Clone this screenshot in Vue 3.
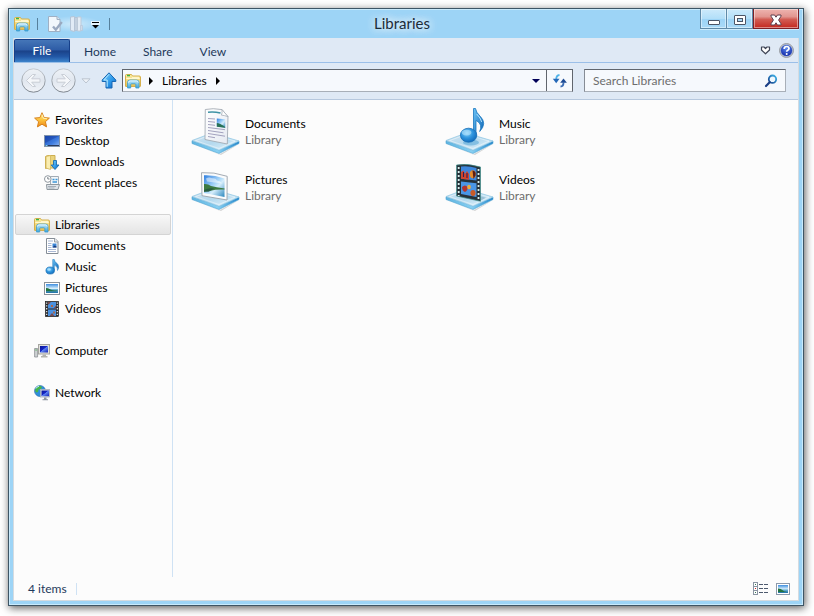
<script setup>
import { ref } from 'vue'

const tabs = ['Home', 'Share', 'View']
const search = ref('')
const selected = ref('Libraries')

const groups = [
  {
    name: 'Favorites',
    icon: 'star',
    items: [
      { name: 'Desktop', icon: 'desktop' },
      { name: 'Downloads', icon: 'downloads' },
      { name: 'Recent places', icon: 'recent' }
    ]
  },
  {
    name: 'Libraries',
    icon: 'folder',
    items: [
      { name: 'Documents', icon: 'document' },
      { name: 'Music', icon: 'music' },
      { name: 'Pictures', icon: 'picture' },
      { name: 'Videos', icon: 'video' }
    ]
  },
  { name: 'Computer', icon: 'computer', items: [] },
  { name: 'Network', icon: 'network', items: [] }
]

const libraries = [
  { name: 'Documents', icon: 'lib-documents' },
  { name: 'Music', icon: 'lib-music' },
  { name: 'Pictures', icon: 'lib-pictures' },
  { name: 'Videos', icon: 'lib-videos' }
]
</script>

<template>
  <div class="page">
    <svg class="sprite" aria-hidden="true">
      <defs>
        <linearGradient id="gFolder" x1="0" y1="0" x2="0" y2="1">
          <stop offset="0" stop-color="#fbeea6" /><stop offset="1" stop-color="#e9c04f" />
        </linearGradient>
        <linearGradient id="gStand" x1="0" y1="0" x2="0" y2="1">
          <stop offset="0" stop-color="#c4ebfb" /><stop offset="1" stop-color="#3aa4dc" />
        </linearGradient>
        <linearGradient id="gStar" x1="0" y1="0" x2="0" y2="1">
          <stop offset="0" stop-color="#fff3a0" /><stop offset=".5" stop-color="#fcc33c" /><stop offset="1" stop-color="#f08a1c" />
        </linearGradient>
        <linearGradient id="gScreen" x1="0" y1="0" x2="1" y2="1">
          <stop offset="0" stop-color="#1c4cb8" /><stop offset=".6" stop-color="#3f7de0" /><stop offset="1" stop-color="#8fb6f0" />
        </linearGradient>
        <linearGradient id="gMonitor" x1="0" y1="0" x2="1" y2="1">
          <stop offset="0" stop-color="#0a1690" /><stop offset=".45" stop-color="#1626c8" /><stop offset=".5" stop-color="#5f86f2" /><stop offset="1" stop-color="#1524b8" />
        </linearGradient>
        <linearGradient id="gNote" x1="0" y1="0" x2="1" y2="1">
          <stop offset="0" stop-color="#6cc4f6" /><stop offset="1" stop-color="#0c62b4" />
        </linearGradient>
        <radialGradient id="gHead" cx=".4" cy=".35" r=".7">
          <stop offset="0" stop-color="#8ad3f8" /><stop offset=".5" stop-color="#2f95de" /><stop offset="1" stop-color="#0f68b8" />
        </radialGradient>
        <linearGradient id="gSky" x1="0" y1="0" x2="0" y2="1">
          <stop offset="0" stop-color="#3d8ee0" /><stop offset=".5" stop-color="#d8effb" /><stop offset=".6" stop-color="#6fb4d8" /><stop offset="1" stop-color="#1c6fa6" />
        </linearGradient>
        <linearGradient id="gPhoto" x1="0" y1="0" x2="1" y2="1">
          <stop offset="0" stop-color="#2f7fe0" /><stop offset=".45" stop-color="#a5d4f8" /><stop offset=".6" stop-color="#d5edfb" /><stop offset="1" stop-color="#2a86bd" />
        </linearGradient>
        <linearGradient id="gTray" x1="0" y1="0" x2="1" y2="1">
          <stop offset="0" stop-color="#d3e4f0" /><stop offset=".5" stop-color="#b4d9ee" /><stop offset="1" stop-color="#e4f4fc" />
        </linearGradient>
        <linearGradient id="gTrayEdge" x1="0" y1="0" x2="1" y2="0">
          <stop offset="0" stop-color="#5eb4e0" /><stop offset=".55" stop-color="#86cff2" /><stop offset="1" stop-color="#2587cc" />
        </linearGradient>
        <linearGradient id="gPaper" x1="0" y1="0" x2="1" y2="1">
          <stop offset="0" stop-color="#ffffff" /><stop offset="1" stop-color="#e6eaf2" />
        </linearGradient>
        <linearGradient id="gUp" x1="0" y1="0" x2="1" y2="1">
          <stop offset="0" stop-color="#7ed2fb" /><stop offset=".6" stop-color="#2b96e8" /><stop offset="1" stop-color="#0d5cb8" />
        </linearGradient>
        <radialGradient id="gHelp" cx=".5" cy=".3" r=".7">
          <stop offset="0" stop-color="#5c8cf0" /><stop offset="1" stop-color="#1228a8" />
        </radialGradient>
        <linearGradient id="gLens" x1="1" y1="0" x2="0" y2="1">
          <stop offset="0" stop-color="#3db4ea" /><stop offset="1" stop-color="#16418c" />
        </linearGradient>
        <linearGradient id="gCircle" x1="0" y1="0" x2="0" y2="1">
          <stop offset="0" stop-color="#eef2f7" /><stop offset=".5" stop-color="#e1e7ef" /><stop offset="1" stop-color="#f0f3f8" />
        </linearGradient>
        <linearGradient id="gCircleEdge" x1="0" y1="0" x2="0" y2="1">
          <stop offset="0" stop-color="#c3c9d0" /><stop offset="1" stop-color="#7d858e" />
        </linearGradient>
      </defs>

      <symbol id="folder" viewBox="0 0 16 16">
        <path d="M.5 13V2.5q0-1 1-1h5l1 1.500h6.500q1.500 0 1.500 1V13q0 .5-.5.5H1q-.5 0-.5-.5z" fill="url(#gFolder)" stroke="#d5b04e" />
        <path d="M2 2.600h3" stroke="#39b54a" stroke-width="1.400" />
        <path d="M7 4.400h7M1.300 5.500h13.400" stroke="#fff8cf" />
        <path d="M2.500 15V9.500Q2.500 7 5 7h6.500Q14 7 14 9.500V15h-3.200v-3.400q0-.8-.8-.8H6.500q-.8 0-.8.8V15z" fill="url(#gStand)" stroke="#3c9dcd" stroke-width=".8" />
        <path d="M3.500 9.500q0-1.600 1.700-1.600h6.200q1.700 0 1.700 1.600" fill="none" stroke="#ecf9ff" stroke-width=".9" />
      </symbol>

      <symbol id="star" viewBox="0 0 16 16">
        <path d="M8 .7l2.100 4.900 5.300.5-4 3.600 1.200 5.200L8 12.200l-4.600 2.700 1.200-5.200-4-3.600 5.300-.5z" fill="url(#gStar)" stroke="#d9831c" stroke-linejoin="round" />
        <path d="M8 2.500l1.400 3.800 3.500.3" fill="none" stroke="#fff8cc" stroke-width=".8" />
      </symbol>

      <symbol id="desktop" viewBox="0 0 16 16">
        <rect x=".5" y="2.500" width="15" height="11" fill="url(#gScreen)" stroke="#8194ad" />
        <path d="M1 3h14L1 10z" fill="#0b2f8f" opacity=".35" />
        <path d="M1 12.500h14" stroke="#2b3b5c" />
        <path d="M1.500 12.500h2" stroke="#7fd0f2" />
      </symbol>

      <symbol id="downloads" viewBox="0 0 16 16">
        <path d="M1.500 2.500l2-1h7.500v12.500H3.500l-2 .5z" fill="#ead37c" stroke="#cdae51" />
        <path d="M2 2.500l4.500-1v14L2 14z" fill="#faedb0" stroke="#d3b65c" stroke-width=".8" />
        <path d="M9.500 6.500h3V11h2.500L11 15.500 7.200 11h2.300z" fill="url(#gUp)" stroke="#1c6cae" stroke-width=".9" stroke-linejoin="round" />
      </symbol>

      <symbol id="recent" viewBox="0 0 16 16">
        <path d="M6.500 1.500h8v10h-8z" fill="#f3f7fa" stroke="#a3acb5" />
        <path d="M8.500 4.500h2m1 0h2M8.500 7h4.500" stroke="#3c96d8" stroke-width="1.400" />
        <path d="M2.500 9.500h13l-1.500 5h-11z" fill="#dfe4e9" stroke="#8f989f" />
        <path d="M4 11.500h8M4.500 13h6" stroke="#a6afb8" />
        <circle cx="3.800" cy="4" r="3.300" fill="#fff" stroke="#8f979e" />
        <path d="M3.800 2v2h1.700" fill="none" stroke="#59636c" stroke-width=".8" />
      </symbol>

      <symbol id="document" viewBox="0 0 16 16">
        <path d="M2.500.5h8.500L14 3.500v12H2.500z" fill="#fff" stroke="#858d96" />
        <path d="M10.500.5v3.500H14" fill="#e6eaef" stroke="#858d96" stroke-width=".8" />
        <path d="M4 3h5M4 5.500h3.500M4 7.500h3.500M4 9.500h3.500M4 11.500h8M4 13.500h8" stroke="#9fb0cf" stroke-width=".9" />
        <rect x="8.500" y="5.500" width="4" height="4" fill="#3c86d6" />
        <path d="M8.500 9.500l2-2 2 1v1z" fill="#1e3a7a" />
      </symbol>

      <symbol id="music" viewBox="0 0 16 16">
        <path d="M8.700.5h1.600q.3 2.200 2.300 3.600 3.600 3 .9 7.400.8-3.600-3.200-5.500v5.200H8.700z" fill="url(#gNote)" stroke="#1c76bd" stroke-width=".5" />
        <ellipse cx="6.200" cy="11.500" rx="4.300" ry="3.600" fill="url(#gHead)" stroke="#1a6fb4" stroke-width=".6" />
        <ellipse cx="5" cy="10.500" rx="1.800" ry="1.200" fill="#b5e5ff" opacity=".7" />
      </symbol>

      <symbol id="picture" viewBox="0 0 16 16">
        <rect x=".5" y="2.500" width="15" height="12" fill="#fff" stroke="#8a9199" />
        <rect x="2" y="4" width="12" height="9" fill="url(#gSky)" />
        <path d="M2 8q2 0 4 1.300t8 1.200L12 11.200H2z" fill="#23733f" />
      </symbol>

      <symbol id="video" viewBox="0 0 16 16">
        <rect x="1.500" y=".5" width="13" height="15" fill="#26282c" stroke="#111" stroke-width=".6" />
        <rect x="4" y="1" width="8" height="6.500" fill="#4a91e0" />
        <rect x="4" y="8.500" width="8" height="6.500" fill="#4a91e0" />
        <path d="M4 1h3L4 4zM12 7.500V4.500L9.500 7.500zM5.500 15l2.500-3 2.500 3z" fill="#7a4a4e" />
        <path d="M7 4h2v2H7zM9 10.500h2v2H9z" fill="#a8684e" />
        <path d="M2.700 1.500v14M13.300 1.500v14" stroke="#f2f2f2" stroke-width="1.200" stroke-dasharray="1.300 1.500" />
      </symbol>

      <symbol id="computer" viewBox="0 0 16 16">
        <path d="M.6 5.500h3v8.500h-3z" fill="#cdd0d2" stroke="#8d9194" stroke-width=".8" />
        <path d="M1.400 7h1.400" stroke="#4bb04f" />
        <rect x="4.500" y="1.500" width="11" height="9.500" fill="#e2e2de" stroke="#a6a6a0" />
        <rect x="6" y="3" width="8" height="6.500" fill="url(#gMonitor)" />
        <path d="M8.500 11.500h3.500v1.500h1.500V14.500H7V13h1.500z" fill="#b3b3ae" />
      </symbol>

      <symbol id="network" viewBox="0 0 16 16">
        <circle cx="6" cy="6" r="5.500" fill="#2f8fdc" stroke="#2b6ba8" stroke-width=".6" />
        <path d="M3 2q3-1.800 5 0L7 4 4.500 4.500 4 7l-2 .5L1 5zM6 8l3-2 2 1-3 4H6z" fill="#48b648" />
        <path d="M2 3.500q1-2 3-2.300" stroke="#c9f0ff" fill="none" />
        <rect x="6.500" y="4.500" width="9" height="7.500" fill="#dfe4ea" stroke="#a9b0ba" stroke-width=".8" />
        <rect x="7.500" y="5.500" width="7.500" height="5.700" fill="url(#gMonitor)" />
        <path d="M10 12.500h2.500v1.800H14v1H8.500v-1H10z" fill="#8c93a0" />
      </symbol>

      <symbol id="save" viewBox="0 0 16 16">
        <path d="M1.500.5h8.500l3 3v12H1.500z" fill="#f2f7fc" stroke="#9fb0c4" />
        <path d="M10 .5V3.500h3" fill="#dbe5ef" stroke="#9fb0c4" />
        <path d="M6 10.500l2.800 3.200L14.800 6" fill="none" stroke="#9aa9c0" stroke-width="2.400" />
      </symbol>

      <symbol id="newfolder" viewBox="0 0 16 16">
        <path d="M1.500 1l4-.5v15l-4-1z" fill="#e1ebf6" stroke="#b5c4d6" />
        <path d="M5.500 1.500h3v13h-3z" fill="#c3d0df" stroke="#b5c4d6" />
        <path d="M8.500 1H12v14H8.500z" fill="#e3ecf5" stroke="#bccad9" />
        <path d="M11.500 9.500h2v5h-2z" fill="#cfdbe8" stroke="#b5c4d6" stroke-width=".6" />
      </symbol>

      <symbol id="tray" viewBox="0 0 49 48">
        <path d="M2 36l26 10.500L48 36l-18 11z" fill="#000" opacity=".16" />
        <path d="M1 32.700L28 42l20-9v2.500L28 45.500 1 35.500z" fill="url(#gTrayEdge)" stroke="#4fa3d0" stroke-width=".6" />
        <path d="M1 32.500L21 25l27 8-20 9.300z" fill="url(#gTray)" stroke="#8ec6e2" stroke-width=".7" />
        <path d="M4.500 32.600L21 26.500l23 6.600-16 7.400z" fill="none" stroke="#fff" stroke-width=".6" opacity=".7" />
      </symbol>

      <symbol id="lib-documents" viewBox="0 0 49 48">
        <use href="#tray" width="49" height="48" />
        <path d="M14 31.500L14.300 1.500Q22-.2 31 1.600l6 7L36.300 36z" fill="url(#gPaper)" stroke="#9ca3ac" stroke-width=".8" />
        <path d="M31 1.600q.5 3.500-.6 5.500 3 .3 6.600 1.500z" fill="#fff" stroke="#a6adb6" stroke-width=".8" />
        <path d="M17 4.300q6-.8 12.500.8" stroke="#3f93a5" stroke-width="1.500" fill="none" />
        <path d="M17 10.500l7 .5M17 13.500l7 .7M17 16.500l7 .8M17 19.500l17 2.200M17 22.500l15.500 2.300M17 25.500l17 2.700M17 28.500l7 1.200" stroke="#9a98b8" stroke-width=".9" />
        <path d="M25.800 10.500l8.400.8v8.400l-8.400-1z" fill="url(#gPhoto)" />
        <path d="M25.800 15q3 0 8.400 4v.7l-8.400-1z" fill="#287157" />
      </symbol>

      <symbol id="lib-pictures" viewBox="0 0 49 48">
        <use href="#tray" width="49" height="48" />
        <path d="M10.500 8.700q12-1 25.700 3.600L36 36 11 31.700z" fill="#fafbfc" stroke="#9aa1aa" stroke-width=".9" />
        <path d="M13 11.300q10-.5 20.500 3.200v18.500L13 29z" fill="url(#gPhoto)" />
        <path d="M15 14.500q3-2 6-.3 4-.4 5 2.300 3 0 5 3L16 17.500z" fill="#fff" opacity=".5" />
        <path d="M13 20q4-.3 7 2 5 1.300 13.500 2.500v1q-9-.3-14 1.200L13 28z" fill="#3d7a42" />
        <path d="M13 26q5-2.500 10-1.500L17.500 28l-4.500-.6z" fill="#1a4a40" opacity=".6" />
      </symbol>

      <symbol id="lib-music" viewBox="0 0 49 48">
        <use href="#tray" width="49" height="48" />
        <ellipse cx="26" cy="34.500" rx="8" ry="3" fill="#4a9fd4" opacity=".5" />
        <path d="M28.500.5h2q.6 4 4.400 7.500 7.600 7.300-.2 15.500 3.200-6.800-2.700-10.500L31 12.500v15.500h-2.500z" fill="url(#gNote)" stroke="#1976be" stroke-width=".8" />
        <path d="M31.700 6q4 4 5 8" fill="none" stroke="#bce8ff" stroke-width=".9" />
        <ellipse cx="23.600" cy="27.200" rx="8.200" ry="7" fill="url(#gHead)" stroke="#1a70b6" stroke-width=".8" />
        <ellipse cx="21.500" cy="24.600" rx="4.800" ry="2.800" fill="#bfe9ff" opacity=".55" />
      </symbol>

      <symbol id="lib-videos" viewBox="0 0 49 48">
        <use href="#tray" width="49" height="48" />
        <path d="M17 32.500l18 4.500 6-3.300-7-2z" fill="#7aa6bd" opacity=".55" />
        <path d="M11.500 1Q23-1 35.500 3v34.300L11.500 32z" fill="#26323a" stroke="#3f8f8c" stroke-width=".7" />
        <path d="M16 2.500q8-.7 15.500 1.400v12.600L16 14.800z" fill="#3c86dc" />
        <path d="M16 17.500l15.500 1.800v13.800L16 30z" fill="#4a96e6" />
        <path d="M16 14.800V8l2.500-1.500L20 10l2-3 2 3v5.800z" fill="#d2452c" />
        <ellipse cx="27.800" cy="10.300" rx="3" ry="4" fill="#e48b2c" />
        <path d="M27.500 6.400q4 .5 3 5l-2 3.600z" fill="#5a1d18" />
        <path d="M17 23q3-3 5.500 0 .8 3-2.500 5-3-1-3-5z" fill="#b3352e" />
        <ellipse cx="24" cy="23" rx="1.800" ry="2.300" fill="#efae3b" />
        <ellipse cx="28" cy="29" rx="2.600" ry="2.900" fill="#ca5b28" />
        <path d="M18.500 8v5M22 9v5" stroke="#302058" stroke-width="1.100" />
        <path d="M13.700 3v29M33.500 5v31" stroke="#d9f0ef" stroke-width="1.800" stroke-dasharray="2 2" />
      </symbol>
    </svg>

    <div class="window">
      <header class="titlebar">
        <div class="quick">
          <svg class="i16"><use href="#folder" /></svg>
          <span class="bar"></span>
          <div class="quick-tools">
            <button type="button" aria-label="Properties"><svg class="i16"><use href="#save" /></svg></button>
            <button type="button" aria-label="New folder"><svg class="i16"><use href="#newfolder" /></svg></button>
            <button type="button" aria-label="Customize Quick Access Toolbar">
              <svg width="9" height="16" viewBox="0 0 9 16"><path d="M0 5h9v4H0z" fill="#fff" opacity=".7" /><path d="M1 6.500h7" stroke="#000" /><path d="M1 9h7l-3.500 3.500z" fill="#000" /></svg>
            </button>
          </div>
          <span class="bar"></span>
        </div>
        <h1>Libraries</h1>
        <div class="caption">
          <button type="button" aria-label="Minimize">
            <svg width="14" height="14" viewBox="0 0 14 14"><rect x="1.500" y="8.500" width="11" height="4" rx=".5" fill="#fff" stroke="#4c5566" /></svg>
          </button>
          <button type="button" aria-label="Maximize">
            <svg width="14" height="14" viewBox="0 0 14 14"><rect x="1.500" y="3.500" width="11" height="9" rx=".5" fill="#fff" stroke="#4c5566" /><rect x="4.500" y="6.500" width="5" height="3" fill="#a8d8f5" stroke="#4c5566" /></svg>
          </button>
          <button type="button" class="close" aria-label="Close">
            <svg width="14" height="14" viewBox="0 0 14 14"><path d="M2 3h3.600L7 5.200 8.400 3H12v1.200L9.600 8l2.400 3.800V13H8.400L7 10.800 5.600 13H2v-1.200L4.400 8 2 4.200z" fill="#fff" stroke="#5c3f4c" stroke-linejoin="round" /></svg>
          </button>
        </div>
      </header>

      <div class="client">
        <nav class="ribbon" aria-label="Ribbon">
          <button type="button" class="file">File</button>
          <button v-for="tab in tabs" :key="tab" type="button">{{ tab }}</button>
          <div class="ribbon-end">
            <button type="button" aria-label="Expand the Ribbon">
              <svg width="11" height="9" viewBox="0 0 11 9"><path d="M1.500 1h2.500l1.500 1.500L7 1h2.500v3L5.500 7.800 1.500 4z" fill="#fff" stroke="#3f4556" stroke-width="1.200" stroke-linejoin="round" /></svg>
            </button>
            <button type="button" aria-label="Help">
              <svg width="15" height="15" viewBox="0 0 15 15"><circle cx="7.500" cy="7.500" r="6.900" fill="#e3e6ea" stroke="#8b8f96" /><circle cx="7.500" cy="7.500" r="5.600" fill="url(#gHelp)" stroke="#3356b4" stroke-width=".6" /><path d="M5.200 6q0-2.500 2.400-2.500T10 5.600q0 1.100-1.300 1.700-1 .5-1 1.500" fill="none" stroke="#fff" stroke-width="1.700" /><circle cx="7.700" cy="11" r="1" fill="#fff" /></svg>
            </button>
          </div>
        </nav>

        <div class="navbar">
          <div class="history">
            <button type="button" aria-label="Back">
              <svg width="25" height="25" viewBox="0 0 25 25"><circle cx="12.500" cy="12.500" r="11.700" fill="url(#gCircle)" stroke="url(#gCircleEdge)" /><path d="M5.500 12.500l6-6h3l-3.800 4.300h8.300v3.400h-8.300l3.800 4.300h-3z" fill="#f5f7fa" stroke="#c9ced6" stroke-linejoin="round" /></svg>
            </button>
            <button type="button" aria-label="Forward">
              <svg width="25" height="25" viewBox="0 0 25 25"><circle cx="12.500" cy="12.500" r="11.700" fill="url(#gCircle)" stroke="url(#gCircleEdge)" /><path d="M19.500 12.500l-6-6h-3l3.800 4.300H6v3.400h8.300l-3.800 4.300h3z" fill="#f5f7fa" stroke="#c9ced6" stroke-linejoin="round" /></svg>
            </button>
            <button type="button" aria-label="Recent locations">
              <svg width="10" height="6" viewBox="0 0 10 6"><path d="M1 .8h8L5 5z" fill="#eef2f7" stroke="#bcc5d0" /></svg>
            </button>
          </div>
          <button type="button" class="up" aria-label="Up">
            <svg width="16" height="17" viewBox="0 0 16 17"><path d="M8 .8L14.800 8v1.500h-3.800V16H5V9.500H1.200V8z" fill="url(#gUp)" stroke="#1667b4" stroke-linejoin="round" /><path d="M8 2.300L2.900 8H6.200v6.800" fill="none" stroke="#b9e9ff" /></svg>
          </button>
          <div class="address">
            <svg class="i16"><use href="#folder" /></svg>
            <svg class="chev" width="6" height="8" viewBox="0 0 6 8"><path d="M0 0l4 4-4 4z" /></svg>
            <a href="#libraries">Libraries</a>
            <svg class="chev" width="6" height="8" viewBox="0 0 6 8"><path d="M1 0l4 4-4 4z" /></svg>
            <button type="button" class="drop" aria-label="Previous locations">
              <svg width="8" height="4" viewBox="0 0 8 4"><path d="M0 0h8L4 4z" fill="#000058" /></svg>
            </button>
            <button type="button" class="refresh" aria-label="Refresh">
              <svg width="16" height="14" viewBox="0 0 16 14"><path d="M7.500 1Q4.200 1.200 4.200 5.500" fill="none" stroke="#4fb2e8" stroke-width="1.800" /><path d="M.8 4.800h6.700L4.200 9.200z" fill="#2468b8" /><path d="M8.500 12.500q3 0 3-4" fill="none" stroke="#3a6cb4" stroke-width="1.800" /><path d="M8.200 8.800h6.700L11.500 4.400z" fill="#1c4a94" /></svg>
            </button>
          </div>
          <form class="search" role="search" @submit.prevent>
            <input v-model="search" type="text" placeholder="Search Libraries" aria-label="Search Libraries" />
            <button type="submit" aria-label="Search">
              <svg width="14" height="14" viewBox="0 0 14 14"><circle cx="8.500" cy="5.200" r="3.700" fill="#eef8fe" stroke="url(#gLens)" stroke-width="1.800" /><path d="M5.700 8.200L2 12" stroke="#1b3f86" stroke-width="2.200" stroke-linecap="round" /></svg>
            </button>
          </form>
        </div>

        <div class="body">
          <nav class="tree" aria-label="Navigation pane">
            <ul v-for="group in groups" :key="group.name">
              <li>
                <a href="#" :class="{ selected: selected === group.name }" @click.prevent="selected = group.name">
                  <svg class="i16"><use :href="'#' + group.icon" /></svg>{{ group.name }}
                </a>
              </li>
              <li v-for="item in group.items" :key="item.name">
                <a href="#" class="child">
                  <svg class="i16"><use :href="'#' + item.icon" /></svg>{{ item.name }}
                </a>
              </li>
            </ul>
          </nav>
          <main class="files">
            <a v-for="lib in libraries" :key="lib.name" href="#" class="tile">
              <svg class="big"><use :href="'#' + lib.icon" /></svg>
              <span class="label">
                <span>{{ lib.name }}</span>
                <span class="kind">Library</span>
              </span>
            </a>
          </main>
        </div>

        <footer class="status">
          <span class="count">4 items</span>
          <div class="views">
            <button type="button" aria-label="Details view">
              <svg width="16" height="14" viewBox="0 0 16 14"><g fill="#fff" stroke="#8b95a3"><rect x=".5" y=".5" width="4" height="4" /><rect x=".5" y="4.500" width="4" height="4" /><rect x=".5" y="8.500" width="4" height="4" /></g><path d="M2 2.500h1M2 10.500h1" stroke="#3c7a55" /><path d="M2 6.500h1" stroke="#c22" /><path d="M6 2.500h4m1 0h4M6 6.500h4m1 0h4M6 10.500h4m1 0h4" stroke="#4d5a6e" /></svg>
            </button>
            <button type="button" aria-label="Large icons view">
              <svg width="14" height="12" viewBox="0 0 14 12"><rect x=".5" y=".5" width="13" height="11" fill="#fff" stroke="#8c99ab" /><rect x="2" y="2" width="10" height="8" fill="url(#gSky)" /><path d="M2 5.500q3 0 5 2t5 1L10 9H2z" fill="#23733f" /></svg>
            </button>
          </div>
        </footer>
      </div>
    </div>
  </div>
</template>

<style>
body {
  background: #fff;
}
</style>

<style scoped>
.page {
  box-sizing: border-box;
  display: flex;
  min-height: 100vh;
  padding: 8px 10px 10px 8px;
  font-family: Lato, "Open Sans", "Noto Sans", sans-serif;
  font-size: 12px;
  line-height: 16px;
  color: #000;
}

.sprite {
  position: absolute;
  width: 0;
  height: 0;
}

svg {
  display: block;
  flex: none;
}

.i16 {
  width: 16px;
  height: 16px;
}

button {
  display: flex;
  align-items: center;
  justify-content: center;
  box-sizing: border-box;
  padding: 0;
  border: 0;
  background: none;
  font: inherit;
  color: inherit;
}

a {
  color: inherit;
  text-decoration: none;
}

.window {
  display: flex;
  flex: 1;
  flex-direction: column;
  min-width: 0;
  padding: 0 4px 4px;
  border: 1px solid #3d5565;
  background: #9dd4f6;
  box-shadow: inset 0 0 0 1px #c9eafc, 1px 2px 8px rgba(0, 0, 0, 0.65);
}

.titlebar {
  display: grid;
  grid-template-columns: 1fr auto 1fr;
  height: 29px;
}

.quick {
  display: flex;
  align-items: center;
  gap: 7px;
  padding-left: 1px;
}

.quick-tools {
  display: flex;
  gap: 6px;
  padding: 0 2px;
  background: radial-gradient(closest-side, rgba(255, 255, 255, 0.5), rgba(255, 255, 255, 0));
}

.bar {
  width: 1px;
  height: 12px;
  background: #56809c;
}

h1 {
  align-self: center;
  margin: 0;
  padding: 0 8px 2px 0;
  font-size: 15px;
  font-weight: 400;
  line-height: 20px;
  color: #1c2c38;
  text-shadow: 0 0 8px #fff, 0 0 8px #fff;
}

.caption {
  display: flex;
  align-self: start;
  justify-content: flex-end;
}

.caption button {
  width: 27px;
  height: 20px;
  border: 1px solid #5f8aa8;
  border-top: 0;
  background: linear-gradient(#cdeafb, #b2dff9 50%, #9dd4f6 55%, #a9daf8);
  box-shadow: inset 0 0 0 1px rgba(255, 255, 255, 0.45), 0 1px 0 #cdecfd;
}

.caption button + button {
  width: 26px;
  border-left: 0;
}

.caption button.close {
  width: 46px;
  border-left: 1px solid;
  border-color: #7c2026;
  background: linear-gradient(#eeb5b0, #e29690 40%, #d25c53 55%, #c4281e);
}

.client {
  display: flex;
  flex: 1;
  flex-direction: column;
  border: 1px solid #d5dbe0;
  border-top: 0;
  background: #fcfcfc;
}

.ribbon {
  display: flex;
  align-items: stretch;
  gap: 1px;
  box-sizing: border-box;
  height: 25px;
  padding-top: 1px;
  border-bottom: 1px solid #9bbfe8;
  background: #dfe9f5;
  color: #1e395b;
}

.ribbon > button {
  padding: 2px 13px 0;
}

.ribbon > .file {
  width: 56px;
  padding: 0;
  border: 1px solid #16408a;
  border-bottom: 0;
  border-radius: 2px 2px 0 0;
  background: linear-gradient(#4576b8, #2d5ca6 45%, #1a4289 50%, #2257a5 75%, #3d84cc);
  color: #fff;
}

.ribbon-end {
  display: flex;
  align-items: center;
  gap: 8px;
  margin-left: auto;
  padding-right: 4px;
}

.navbar {
  display: flex;
  align-items: center;
  box-sizing: border-box;
  height: 37px;
  padding: 0 12px 1px 7px;
  border-bottom: 1px solid #b6c8de;
  background: #dfe9f5;
}

.history {
  display: flex;
  align-items: center;
  gap: 5px;
}

.up {
  margin: 0 5px 0 10px;
}

.address,
.search {
  display: flex;
  align-items: center;
  box-sizing: border-box;
  height: 23px;
  border: 1px solid #a8afb8;
  border-top-color: #60656d;
  border-left-color: #868c95;
  background: #f6f9fd;
}

.address {
  flex: 1;
  gap: 8px;
  padding-left: 2px;
  border-color: #60656d #60656d #a8afb8;
}

.address .chev {
  margin-right: -1px;
}

.drop {
  width: 20px;
  height: 21px;
  margin-left: auto;
  margin-right: -8px;
}

.refresh {
  width: 26px;
  height: 21px;
  border-left: 1px solid #60656d;
}

.search {
  width: 202px;
  margin-left: 11px;
  padding: 0 7px 0 8px;
}

.search input {
  flex: 1;
  min-width: 0;
  padding: 0;
  border: 0;
  outline: 0;
  background: none;
  font: inherit;
}

.search input::placeholder {
  color: #6d6d6d;
  opacity: 1;
}

.body {
  display: flex;
  flex: 1;
}

.tree {
  box-sizing: border-box;
  width: 159px;
  padding: 9px 1px 0;
  border-right: 1px solid #cfe2f4;
}

.tree ul {
  margin: 0 0 21px;
  padding: 0;
  list-style: none;
}

.tree a {
  display: flex;
  align-items: center;
  gap: 5px;
  box-sizing: border-box;
  height: 21px;
  padding-left: 18px;
  border: 1px solid transparent;
  border-radius: 2px;
}

.tree .child {
  padding-left: 28px;
}

.tree .selected {
  border-color: #d4d4d4;
  background: linear-gradient(#f8f8f8, #e4e4e4);
}

.files {
  display: grid;
  flex: 1;
  grid-template-columns: repeat(auto-fill, 254px);
  grid-auto-rows: 56px;
  align-content: start;
  padding: 4px 0 0 18px;
}

.tile {
  display: flex;
  align-items: center;
  gap: 5px;
}

.big {
  width: 49px;
  height: 48px;
}

.label {
  display: flex;
  flex-direction: column;
}

.kind {
  color: #6d6d6d;
}

.status {
  display: flex;
  align-items: center;
  justify-content: space-between;
  height: 23px;
  padding: 0 8px 0 14px;
  color: #1e395b;
}

.count {
  padding-right: 9px;
  border-right: 1px solid #cfe2f4;
  line-height: 12px;
}

.views {
  display: flex;
  align-items: center;
  gap: 7px;
}
</style>
